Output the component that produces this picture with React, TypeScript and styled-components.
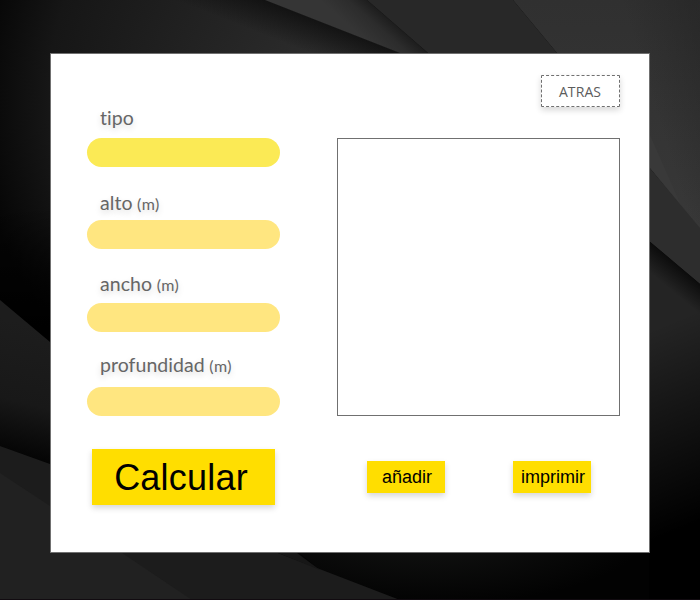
import React from "react";
import styled, { createGlobalStyle } from "styled-components";

const GlobalStyle = createGlobalStyle`
  * { box-sizing: border-box; }
  body { margin: 0; background: #000; }
`;

const Page = styled.main`
  position: relative;
  width: 700px;
  height: 600px;
  padding: 53px 50px 47px;
  overflow: hidden;
`;

const Backdrop = styled.svg`
  position: absolute;
  inset: 0;
  display: block;
`;

const Panel = styled.section`
  position: relative;
  display: grid;
  grid-template-columns: 193px 283px;
  column-gap: 57px;
  width: 600px;
  height: 500px;
  padding: 21px 29px 0 36px;
  background: #fff;
  border: 1px solid #707070;
`;

const Form = styled.form`
  display: flex;
  flex-direction: column;
  padding-top: 28px;
`;

const Field = styled.label<{ $height: number }>`
  display: flex;
  flex-direction: column;
  justify-content: space-between;
  height: ${(p) => p.$height}px;
`;

const Caption = styled.span<{ $gap: number }>`
  padding: ${(p) => p.$gap}px 0 0 13px;
  font: 400 19.5px/24px Lato, sans-serif;
  letter-spacing: 0.05px;
  color: #666;
  text-shadow: 0 3px 6px rgba(0, 0, 0, 0.16);
  white-space: pre;
`;

const Unit = styled.small`
  font-size: 16px;
  letter-spacing: 0.45px;
`;

const Input = styled.input<{ $color: string }>`
  width: 193px;
  height: 29px;
  padding: 0 14px;
  border: 0;
  border-radius: 15px;
  outline: 0;
  background: ${(p) => p.$color};
`;

const Result = styled.div`
  display: flex;
  flex-direction: column;
`;

const Button = styled.button`
  display: flex;
  align-items: center;
  justify-content: center;
  width: 78px;
  height: 32px;
  padding: 0 0 0 2px;
  border: 0;
  background: #ffde00;
  box-shadow: 0 3px 6px rgba(0, 0, 0, 0.16);
  font: 18px/20px "Liberation Sans", Arial, sans-serif;
  color: #000;
  white-space: nowrap;
`;

const CalculateButton = styled(Button)`
  width: 183px;
  height: 56px;
  margin: 33px 0 0 5px;
  padding: 2px 5px 0 0;
  font-size: 36px;
  line-height: 42px;
  letter-spacing: 0.2px;
`;

const BackButton = styled(Button)`
  align-self: flex-end;
  width: 79px;
  border: 1px dashed #707070;
  border-radius: 1px;
  background: #fff;
  font: 14px/20px "Open Sans", sans-serif;
  letter-spacing: 0.1px;
  padding: 2px 1px 0 0;
  color: #5c5c5c;
`;

const Preview = styled.div`
  height: 278px;
  margin-top: 31px;
  border: 1px solid #707070;
`;

const Actions = styled.div`
  display: flex;
  gap: 68px;
  padding: 45px 0 0 30px;
`;

const fields = [
  { name: "tipo", color: "#fbea55", height: 64, gap: 3 },
  { name: "alto", unit: "(m)", color: "#ffe680", height: 82, gap: 24 },
  { name: "ancho", unit: "(m)", color: "#ffe680", height: 83, gap: 23 },
  { name: "profundidad", unit: "(m)", color: "#ffe680", height: 84, gap: 21 },
];

function Background() {
  return (
    <Backdrop width="700" height="600" viewBox="0 0 700 600" aria-hidden="true">
      <defs>
        <radialGradient id="corner" gradientUnits="userSpaceOnUse" cx="340" cy="100" r="365">
          <stop offset="0" stopColor="#303030" />
          <stop offset=".4" stopColor="#232323" />
          <stop offset=".8" stopColor="#161616" />
          <stop offset="1" stopColor="#050505" />
        </radialGradient>
        <linearGradient id="cornerFade" x1="0" y1="0" x2="0" y2="1">
          <stop offset=".6" stopColor="#000" stopOpacity="0" />
          <stop offset=".95" stopColor="#000" />
        </linearGradient>
        <linearGradient id="ridgeShade" gradientUnits="userSpaceOnUse" x1="332" y1="26.5" x2="320" y2="57">
          <stop offset="0" stopColor="#0c0c0c" stopOpacity=".75" />
          <stop offset="1" stopColor="#0c0c0c" stopOpacity="0" />
        </linearGradient>
        <linearGradient id="wedge" gradientUnits="userSpaceOnUse" x1="362" y1="37" x2="397" y2="-3">
          <stop offset="0" stopColor="#353535" />
          <stop offset=".35" stopColor="#2c2c2c" />
          <stop offset=".75" stopColor="#131313" />
        </linearGradient>
        <linearGradient id="right" x1="0" y1="0" x2="0" y2="1">
          <stop offset="0" stopColor="#303030" />
          <stop offset="1" stopColor="#383838" />
        </linearGradient>
        <linearGradient id="rightEdge" gradientUnits="userSpaceOnUse" x1="640" y1="60" x2="705" y2="40">
          <stop offset="0" stopColor="#202020" stopOpacity="0" />
          <stop offset="1" stopColor="#202020" stopOpacity=".45" />
        </linearGradient>
        <linearGradient id="rightShade" gradientUnits="userSpaceOnUse" x1="675" y1="263" x2="660" y2="281">
          <stop offset="0" stopColor="#0c0c0c" />
          <stop offset="1" stopColor="#242424" />
        </linearGradient>
        <linearGradient id="rightFade" gradientUnits="userSpaceOnUse" x1="650" y1="330" x2="725" y2="510">
          <stop offset="0" stopColor="#000" stopOpacity="0" />
          <stop offset="1" stopColor="#000" />
        </linearGradient>
        <linearGradient id="leftBand" gradientUnits="userSpaceOnUse" x1="30" y1="325" x2="0" y2="450">
          <stop offset="0" stopColor="#1d1d1d" />
          <stop offset=".6" stopColor="#181818" />
          <stop offset="1" stopColor="#050505" />
        </linearGradient>
        <radialGradient id="bottomGlow">
          <stop offset="0" stopColor="#141514" />
          <stop offset="1" stopColor="#020202" />
        </radialGradient>
      </defs>
      <rect width="700" height="600" fill="#020202" />
      <path d="M0 0H265L400 53V345H0Z" fill="url(#corner)" />
      <path d="M0 0H400V345H0Z" fill="url(#cornerFade)" />
      <path d="M120 -57L400 53V110H120Z" fill="url(#ridgeShade)" />
      <path d="M265 0H367L428 53H400Z" fill="url(#wedge)" />
      <path d="M367 0H513L557 53H428Z" fill="#282828" />
      <path d="M513 0H700V230L557 53Z" fill="url(#right)" />
      <path d="M513 0H700V230L557 53Z" fill="url(#rightEdge)" />
      <path d="M650 135L682 207L650 168Z" fill="#393939" />
      <path d="M649 167L700 228V284L649 241Z" fill="#2d2d2d" />
      <path d="M649 241L700 284V553H649Z" fill="url(#rightShade)" />
      <path d="M649 241L700 284V600H649Z" fill="url(#rightFade)" />
      <ellipse cx="430" cy="530" rx="220" ry="75" fill="url(#bottomGlow)" />
      <path d="M0 300L50 342L320 570L50 464L0 446Z" fill="url(#leftBand)" />
      <path d="M0 446L50 464L278 553L400 600H0Z" fill="#1c1c1c" />
      <path d="M0 473L50 506L122 553L192 600H0Z" fill="#212121" />
      <path d="M278 553H297L320 570Z" fill="#171717" />
      <path d="M0 599H700V600H0Z" fill="#110b10" />
    </Backdrop>
  );
}

export default function App() {
  return (
    <>
      <GlobalStyle />
      <Page>
        <Background />
        <Panel>
          <Form>
            {fields.map((field) => (
              <Field key={field.name} $height={field.height}>
                <Caption $gap={field.gap}>
                  {field.name}
                  {field.unit && <Unit> {field.unit}</Unit>}
                </Caption>
                <Input $color={field.color} />
              </Field>
            ))}
            <CalculateButton type="button">Calcular</CalculateButton>
          </Form>
          <Result>
            <BackButton type="button">ATRAS</BackButton>
            <Preview />
            <Actions>
              <Button type="button">añadir</Button>
              <Button type="button">imprimir</Button>
            </Actions>
          </Result>
        </Panel>
      </Page>
    </>
  );
}
